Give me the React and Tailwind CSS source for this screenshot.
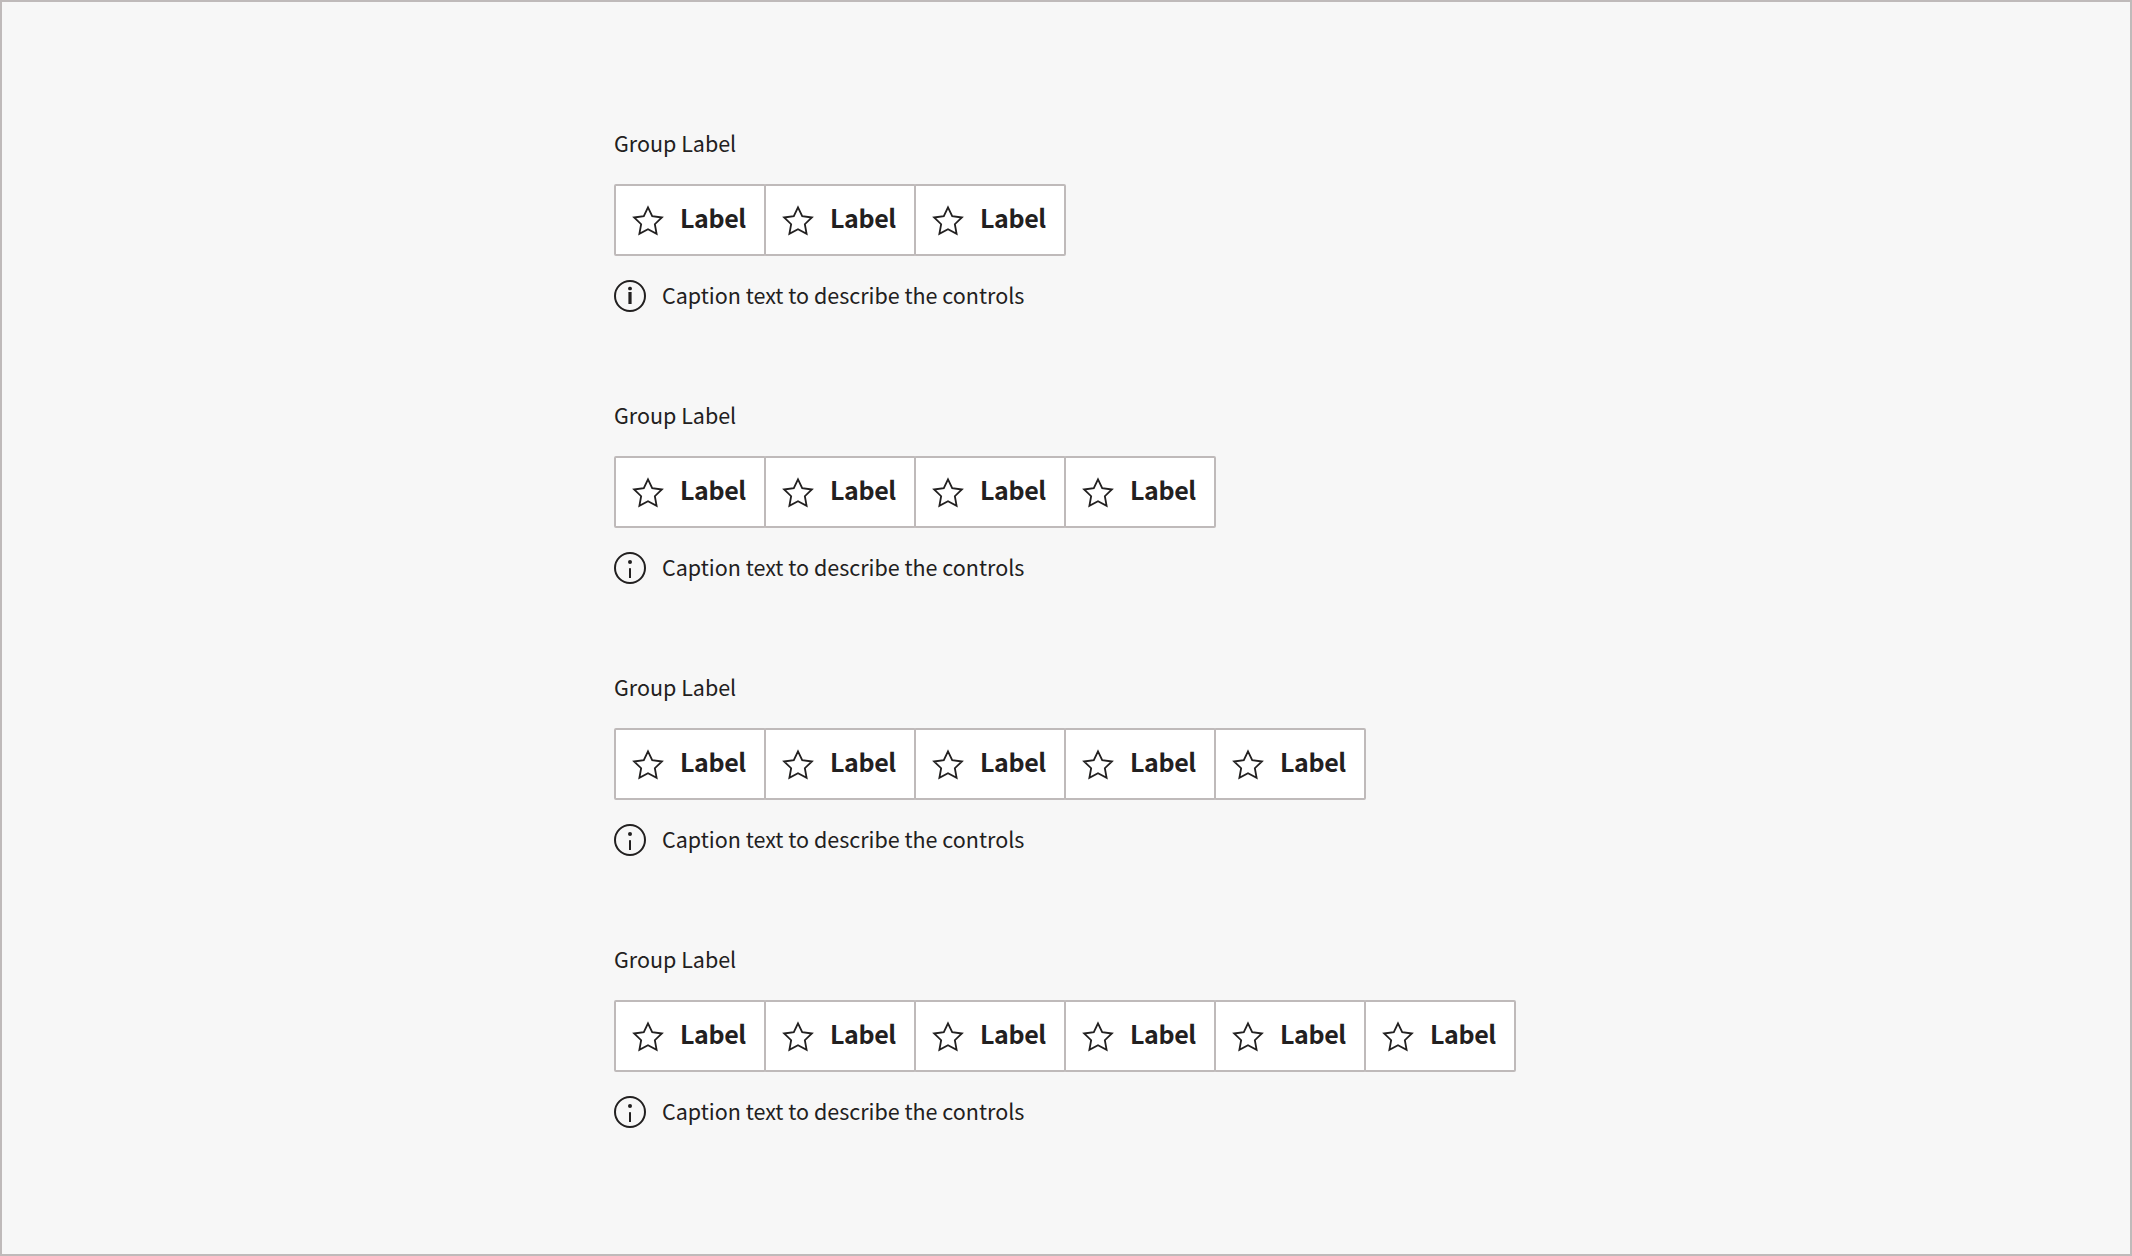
const FONT = "font-['Noto_Sans_CJK_SC','Noto_Sans',sans-serif]";

function Star() {
  return (
    <svg className="size-8 shrink-0" viewBox="0 0 32 32" fill="none" stroke="#222020" strokeWidth="1.8" strokeMiterlimit="10">
      <path d="M16 3.4 L20.2 12.2 L29.9 13.5 L22.85 20.2 L24.6 29.8 L16 25.2 L7.4 29.8 L9.15 20.2 L2.1 13.5 L11.8 12.2 Z" />
    </svg>
  );
}

function Info({ bold }) {
  return (
    <svg className="size-8 shrink-0" viewBox="0 0 32 32" fill="none">
      <circle cx="16" cy="16" r="15" stroke="#222020" strokeWidth="2" />
      {bold ? (
        <>
          <rect x="14.1" y="6.8" width="3.8" height="3.4" rx="1.5" fill="#222020" />
          <rect x="14.4" y="12" width="3.2" height="12" fill="#222020" />
        </>
      ) : (
        <>
          <circle cx="16" cy="10" r="2" fill="#222020" />
          <rect x="15" y="16.2" width="2" height="9.8" fill="#222020" />
        </>
      )}
    </svg>
  );
}

function ControlGroup({ count, bold }) {
  return (
    <section className="flex h-[272px] flex-col items-start">
      <div className="h-[56px] pt-[3px] text-[21.5px] leading-[24px]">Group Label</div>
      <div className="flex">
        {Array.from({ length: count }, (_, i) => (
          <button
            key={i}
            className="-ml-0.5 flex h-[72px] w-[152px] items-center rounded-[2px] border-2 border-[#bfbaba] bg-white pl-4 first:ml-0"
          >
            <Star />
            <span className="mb-1.5 ml-4 text-[25px] leading-[32px] font-semibold tracking-[-0.4px]">Label</span>
          </button>
        ))}
      </div>
      <div className="mt-6 flex h-8 items-center gap-4">
        <Info bold={bold} />
        <span className="mb-0.5 text-[21.5px] leading-[28px]">Caption text to describe the controls</span>
      </div>
    </section>
  );
}

export default function App() {
  return (
    <main className={`${FONT} h-[1256px] w-[2132px] overflow-hidden border-2 border-[#bfbaba] bg-[#f7f7f7] pt-[126px] pl-[612px] text-[#222020]`}>
      <ControlGroup count={3} bold />
      <ControlGroup count={4} />
      <ControlGroup count={5} />
      <ControlGroup count={6} />
    </main>
  );
}
